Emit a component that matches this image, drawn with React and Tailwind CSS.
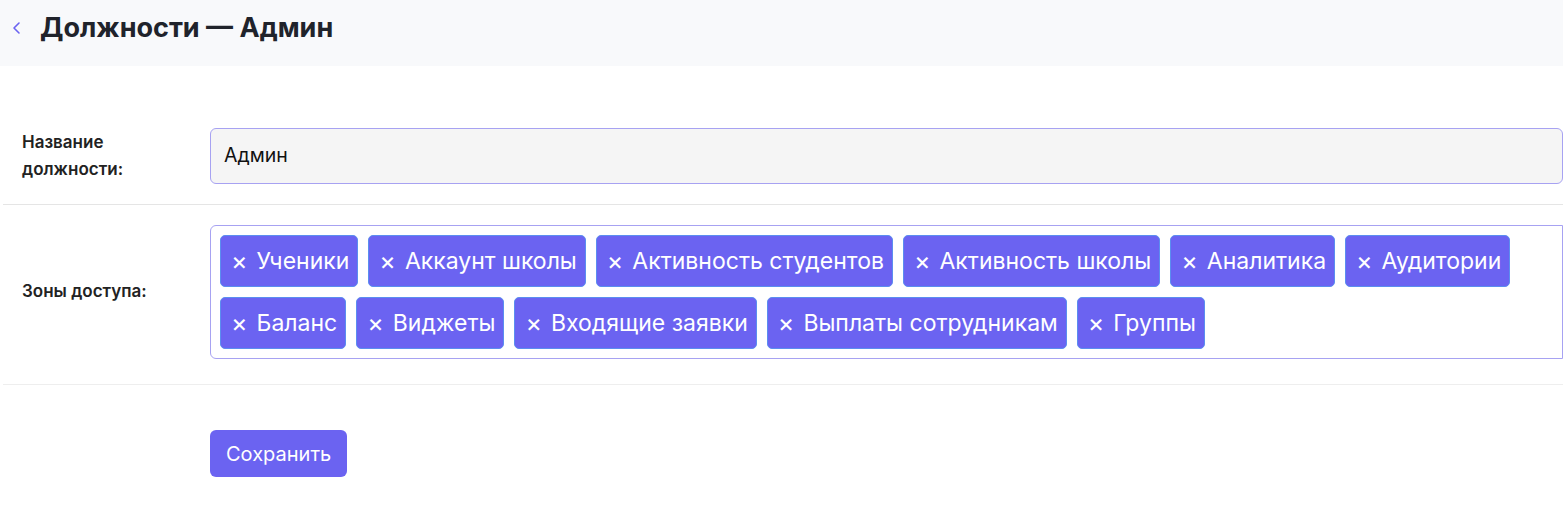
const zones = [
  "Ученики",
  "Аккаунт школы",
  "Активность студентов",
  "Активность школы",
  "Аналитика",
  "Аудитории",
  "Баланс",
  "Виджеты",
  "Входящие заявки",
  "Выплаты сотрудникам",
  "Группы",
];

function Tag({ label }) {
  return (
    <span className="flex h-[52px] items-center gap-[9px] rounded-[5px] border border-[#5b8ef0] bg-[#6b63f1] pl-[10px] pr-[8px] text-[23px] text-white">
      <span className="text-[25px] leading-none">×</span>
      {label}
    </span>
  );
}

export default function App() {
  return (
    <div className="min-h-[513px] bg-white font-['Inter','Noto_Sans',sans-serif] text-[#222]">
      <header className="flex h-[66px] items-center gap-[17px] bg-[#f8f9fb] pb-[10px] pl-[11px]">
        <svg width="12" height="14" viewBox="0 0 12 14" fill="none">
          <path d="M8 2 L3 7 L8 12" stroke="#6b63f1" strokeWidth="1.6" strokeLinecap="round" strokeLinejoin="round" />
        </svg>
        <h1 className="text-[27px] font-bold text-[#20232b]">Должности — Админ</h1>
      </header>

      <div className="mt-[42px] pl-[3px]">
        <div className="flex items-center border-b border-[#e5e5e5] py-5">
          <div className="w-[207px] pl-[19px] text-[17px] font-semibold leading-[27px] text-[#222]">
            Название
            <br />
            должности:
          </div>
          <div className="flex h-[56px] flex-1 items-center rounded-[6px] border border-[#a7a2f2] bg-[#f5f5f5] px-[13px] text-[19.5px] text-[#111]">
            Админ
          </div>
        </div>

        <div className="flex items-center border-b border-[#eeeeee] pt-5 pb-[25px]">
          <div className="w-[207px] pl-[19px] text-[17px] font-semibold text-[#222]">Зоны доступа:</div>
          <div className="flex flex-1 flex-wrap gap-[10px] rounded-l-[6px] border border-[#a7a2f2] p-[9px] pr-0">
            {zones.map((z) => (
              <Tag key={z} label={z} />
            ))}
          </div>
        </div>

        <div className="pl-[207px] pt-[45px]">
          <button className="h-[47px] rounded-[6px] bg-[#6b63f1] px-4 text-[20px] text-white">
            Сохранить
          </button>
        </div>
      </div>
    </div>
  );
}
